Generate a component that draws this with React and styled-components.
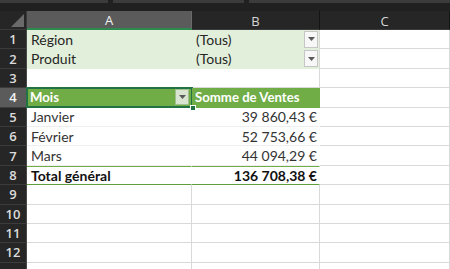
import React from 'react';
import styled, { createGlobalStyle, css } from 'styled-components';

const Global = createGlobalStyle`
  html, body { margin: 0; padding: 0; background: #262626; overflow: hidden; }
  * { box-sizing: border-box; }
`;

const Screen = styled.div`
  width: 450px;
  height: 269px;
  overflow: hidden;
  background: #262626;
  display: flex;
  flex-direction: column;
  font-family: Lato, "Liberation Sans", sans-serif;
`;

const TopStrip = styled.div`
  height: 11px;
  flex: none;
  display: flex;
  gap: 5px;
  align-items: flex-start;
  background: #202020;
`;

const Bar = styled.div`
  height: 3px;
  background: #3b3b3b;
  width: ${(p) => (p.$w ? `${p.$w}px` : 'auto')};
  flex: ${(p) => (p.$w ? 'none' : 1)};
`;

const Sheet = styled.div`
  display: grid;
  grid-template-columns: 27px 165px 128px 130px;
  grid-template-rows: 19px repeat(13, 19.4px);
`;

const Corner = styled.div`
  background: #262626;
  border-right: 1px solid #3a3a3a;
  border-bottom: 1px solid #3a3a3a;
  display: flex;
  align-items: flex-end;
  justify-content: flex-end;
  padding: 0 2px 2px 0;
`;

const ColHeader = styled.div`
  background: ${(p) => (p.$sel ? '#5b5b5b' : '#262626')};
  color: ${(p) => (p.$sel ? '#f2f2f2' : '#d6d6d6')};
  border-right: 1px solid ${(p) => (p.$sel ? '#6a6a6a' : '#141414')};
  border-bottom: ${(p) => (p.$sel ? '2px solid #2e8b4f' : '1px solid #3a3a3a')};
  display: flex;
  align-items: center;
  justify-content: center;
  font-family: "Open Sans", "Noto Sans", sans-serif;
  font-size: 13px;
  padding-top: 1px;
`;

const RowHeader = styled.div`
  background: ${(p) => (p.$sel ? '#5b5b5b' : '#262626')};
  color: ${(p) => (p.$sel ? '#f2f2f2' : '#dcdcdc')};
  border-bottom: 1px solid #3c3c3c;
  border-right: 1px solid #4a4a4a;
  display: flex;
  align-items: center;
  justify-content: center;
  font-family: "Open Sans", "Noto Sans", sans-serif;
  font-weight: 600;
  font-size: 13px;
`;

const kinds = {
  plain: css`
    background: #fff;
  `,
  filter: css`
    background: #e2efda;
    color: #262626;
    border-right-color: #e2efda;
    border-bottom-color: #e2efda;
  `,
  filterEnd: css`
    background: #e2efda;
    color: #262626;
    border-bottom-color: #e2efda;
  `,
  blank: css`
    background: #fff;
    border-right-color: #fff;
  `,
  head: css`
    background: #70ad47;
    color: #fff;
    font-weight: 700;
    font-size: 13.2px;
    padding-left: 3px;
    border-right-color: #70ad47;
    border-bottom-color: #70ad47;
  `,
  body: css`
    background: #fff;
    color: #333;
    border-right-color: #fff;
    border-bottom-color: #eeeeee;
  `,
  total: css`
    background: #fff;
    color: #111;
    font-weight: 700;
    border-right-color: #fff;
    border-top: 1px solid #70ad47;
    border-bottom: 1px solid #5f9e3a;
  `,
};

const Cell = styled.div`
  position: relative;
  border-right: 1px solid #d9d9d9;
  border-bottom: 1px solid #d9d9d9;
  color: #262626;
  font-size: 14px;
  display: flex;
  align-items: center;
  justify-content: ${(p) => (p.$right ? 'flex-end' : 'space-between')};
  padding: 0 2px 0 4px;
  white-space: nowrap;
  ${(p) => kinds[p.$kind || 'plain']}
  ${(p) =>
    p.$selected &&
    css`
      &::after {
        content: '';
        position: absolute;
        left: -1px;
        top: -1px;
        right: -2px;
        bottom: -1px;
        border: 2px solid #217346;
        pointer-events: none;
      }
    `}
`;

const DropButton = styled.span`
  flex: none;
  width: 14px;
  height: ${(p) => (p.$tone === 'head' ? 16 : 17)}px;
  margin-right: ${(p) => (p.$tone === 'head' ? 0 : -1)}px;
  background: ${(p) => (p.$tone === 'head' ? '#d8e4d0' : '#f7f7f7')};
  border: 1px solid ${(p) => (p.$tone === 'head' ? '#9fbf8c' : '#c6c6c6')};
  display: flex;
  align-items: center;
  justify-content: center;
`;

const Handle = styled.span`
  position: absolute;
  right: -5px;
  bottom: -4px;
  width: 6px;
  height: 6px;
  background: #217346;
  border: 1px solid #fff;
  z-index: 2;
`;

const Tri = () => (
  <svg width="7" height="4" viewBox="0 0 7 4">
    <path d="M0 0 H7 L3.5 4 Z" fill="#595959" />
  </svg>
);

const CornerTri = () => (
  <svg width="13" height="13" viewBox="0 0 13 13">
    <path d="M13 0 V13 H0 Z" fill="#6a6a6a" />
  </svg>
);

const rows = [
  { n: 1, a: { t: 'Région', k: 'filter' }, b: { t: '(Tous)', k: 'filterEnd', drop: true } },
  { n: 2, a: { t: 'Produit', k: 'filter' }, b: { t: '(Tous)', k: 'filterEnd', drop: true } },
  { n: 3, a: { t: '', k: 'blank' }, b: { t: '' } },
  { n: 4, sel: true, a: { t: 'Mois', k: 'head', drop: true, selected: true }, b: { t: 'Somme de Ventes', k: 'head' } },
  { n: 5, a: { t: 'Janvier', k: 'body' }, b: { t: '39 860,43 €', k: 'body', right: true } },
  { n: 6, a: { t: 'Février', k: 'body' }, b: { t: '52 753,66 €', k: 'body', right: true } },
  { n: 7, a: { t: 'Mars', k: 'body' }, b: { t: '44 094,29 €', k: 'body', right: true } },
  { n: 8, a: { t: 'Total général', k: 'total' }, b: { t: '136 708,38 €', k: 'total', right: true } },
  { n: 9 }, { n: 10 }, { n: 11 }, { n: 12 }, { n: 13, hideLabel: true },
];

const renderCell = (c, key) => {
  if (!c) return <Cell key={key} />;
  return (
    <Cell key={key} $kind={c.k} $right={c.right} $selected={c.selected}>
      <span>{c.t}</span>
      {c.drop && (
        <DropButton $tone={c.k === 'head' ? 'head' : 'filter'}>
          <Tri />
        </DropButton>
      )}
      {c.selected && <Handle />}
    </Cell>
  );
};

export default function App() {
  return (
    <>
      <Global />
      <Screen>
        <TopStrip>
          <Bar $w={108} />
          <Bar $w={131} />
          <Bar />
        </TopStrip>
        <Sheet>
          <Corner>
            <CornerTri />
          </Corner>
          <ColHeader $sel>A</ColHeader>
          <ColHeader>B</ColHeader>
          <ColHeader>C</ColHeader>
          {rows.map((r) => (
            <React.Fragment key={r.n}>
              <RowHeader $sel={r.sel}>{r.hideLabel ? '' : r.n}</RowHeader>
              {renderCell(r.a, 'a')}
              {renderCell(r.b, 'b')}
              <Cell />
            </React.Fragment>
          ))}
        </Sheet>
      </Screen>
    </>
  );
}
